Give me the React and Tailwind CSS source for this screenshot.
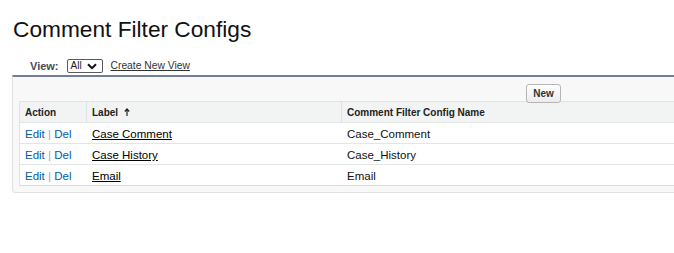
import React from "react";

const rows = [
  { label: "Case Comment", name: "Case_Comment" },
  { label: "Case History", name: "Case_History" },
  { label: "Email", name: "Email" },
];

export default function App() {
  return (
    <div className="w-[674px] h-[253px] overflow-hidden bg-white font-['Liberation_Sans',Arial,sans-serif] text-black">
      <div className="pt-[16px] pl-[13px] text-[22.7px] leading-[26px] text-[#111]">Comment Filter Configs</div>
      <div className="mt-[17px] flex items-center pl-[30px] h-[14px]">
        <span className="text-[11px] font-bold text-[#4a4a56] leading-[14px]">View:</span>
        <div className="ml-[8px] w-[36px] h-[14px] border border-[#5a5a5a] rounded-[2px] flex items-center pl-[3px] text-[10px] leading-[12px] text-[#222]">
          <span>All</span>
          <svg className="ml-[5px]" width="10" height="7" viewBox="0 0 10 7">
            <path d="M1 1.2 L5 5.2 L9 1.2" fill="none" stroke="#111" strokeWidth="2" />
          </svg>
        </div>
        <a className="ml-[8px] text-[10.3px] leading-[14px] text-[#333] underline">Create New View</a>
      </div>
      <div className="mt-[2px] ml-[12px] w-[720px] border-t-[2px] border-t-[#737e96] border-x border-b border-[#dfe1e4] rounded-b-[4px] bg-[#f8f8f8] pl-[6px] pb-[6px]">
        <div className="h-[24px] pt-[3px] pl-[507px]">
          <button className="h-[19px] w-[35px] border border-[#b5b5b5] rounded-[3px] bg-gradient-to-b from-[#ffffff] to-[#ececec] text-[10px] font-bold text-[#333] leading-[17px]">New</button>
        </div>
        <div className="bg-white border-l border-[#e0e3e5] border-b border-b-[#d9dcdf]">
          <div className="flex h-[21px] border-t border-[#e0e3e5] bg-[#f2f3f3] text-[10px] font-bold text-[#222] leading-[12px]">
            <div className="w-[67px] pl-[5px] pt-[5px] border-r border-[#e0e3e5]">Action</div>
            <div className="w-[255px] pl-[5px] pt-[5px] border-r border-[#e0e3e5] flex">
              <span>Label</span>
              <svg className="ml-[6px] mt-[1px]" width="6" height="8" viewBox="0 0 6 8">
                <path d="M3 8 V1.5 M0.8 3.5 L3 1 L5.2 3.5" fill="none" stroke="#222" strokeWidth="1.2" />
              </svg>
            </div>
            <div className="flex-1 pl-[5px] pt-[5px]">Comment Filter Config Name</div>
          </div>
          {rows.map((r) => (
            <div key={r.name} className="flex h-[21px] border-t border-[#e3e5e7] text-[11.5px] leading-[14px] pt-[4px]">
              <div className="w-[67px] pl-[5px] text-[#015ba7]">
                Edit <span className="text-[#9aa7b5]">|</span> Del
              </div>
              <div className="w-[255px] pl-[5px]">
                <a className="underline text-black">{r.label}</a>
              </div>
              <div className="flex-1 pl-[5px] text-[#111]">{r.name}</div>
            </div>
          ))}
        </div>
      </div>
    </div>
  );
}
